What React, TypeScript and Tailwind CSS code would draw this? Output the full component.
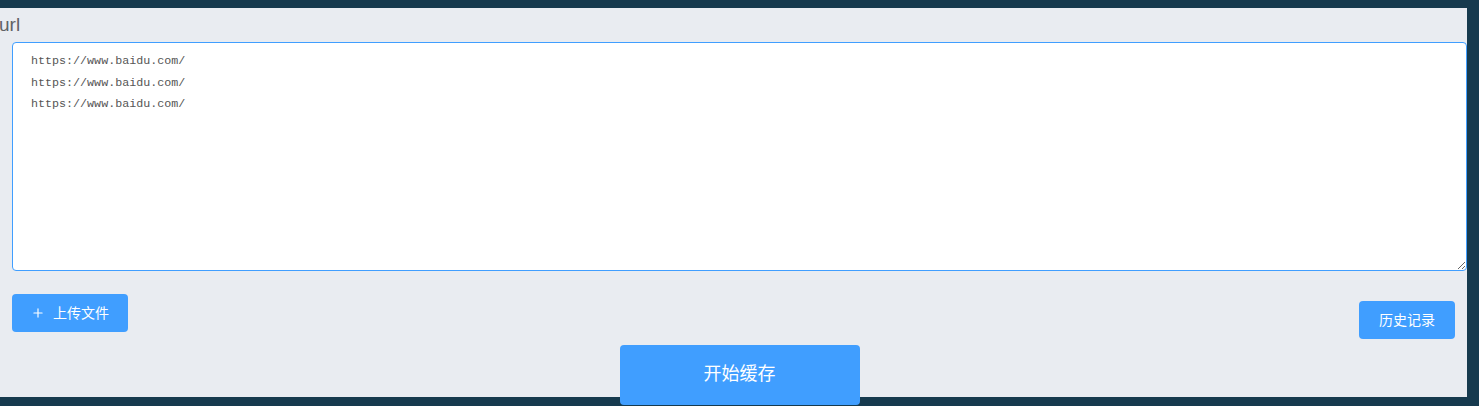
import { Plus } from "lucide-react";

const URLS = ["https://www.baidu.com/", "https://www.baidu.com/", "https://www.baidu.com/"].join("\n");

export default function App() {
  return (
    <div className="h-[406px] w-[1479px] bg-[#163a4e] pt-2 pr-3 font-['Liberation_Sans','Noto_Sans_CJK_SC',sans-serif]">
      <div className="h-[389px] bg-[#e9ecf1]">
        {/* label */}
        <div className="h-[34px] pt-[6px] text-[19px] leading-[22px] text-[#606266] -ml-px">url</div>

        <div className="pl-3">
          <textarea
            readOnly
            value={URLS}
            className="block h-[229px] w-full rounded bg-white border border-[#409eff] pt-[8px] pl-[18px] text-[11.7px] leading-[21.5px] text-[#555] font-['Liberation_Mono',monospace] outline-none"
          />

          <div className="flex items-end justify-between pr-3">
            <button className="mt-[23px] flex h-[38px] w-[116px] items-center justify-center gap-[8px] rounded bg-[#409eff] text-[14px] text-white">
              <Plus size={14} strokeWidth={2} />
              <span>上传文件</span>
            </button>
            <button className="mb-[-7px] flex h-[38px] w-[96px] items-center justify-center rounded bg-[#409eff] text-[14px] text-white">
              历史记录
            </button>
          </div>

          <div className="flex justify-center pt-[13px]">
            <button className="flex h-[60px] w-[240px] items-center justify-center rounded bg-[#409eff] pb-[2px] text-[18px] text-white">
              开始缓存
            </button>
          </div>
        </div>
      </div>
    </div>
  );
}
